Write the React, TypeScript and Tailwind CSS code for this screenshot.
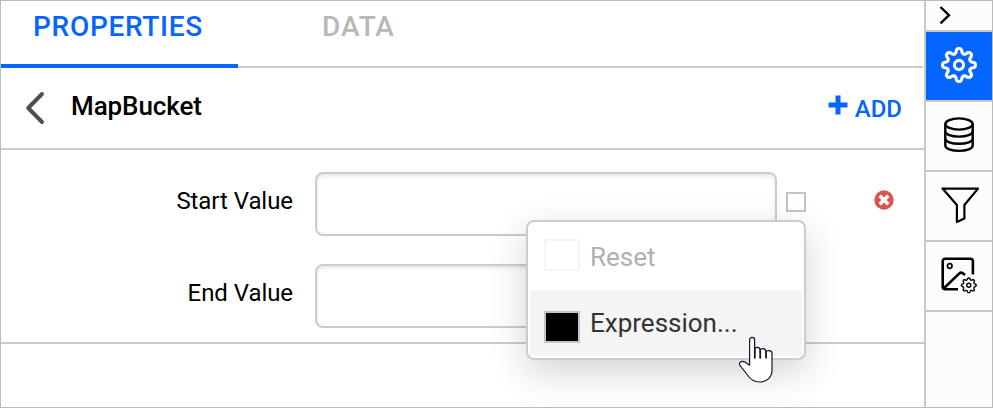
import React from 'react';

function gearPath(c: number, r: number, amp: number) {
  const pts: string[] = [];
  for (let i = 0; i < 160; i++) {
    const a = (i / 160) * Math.PI * 2;
    const w = Math.tanh(1.5 * Math.cos(8 * a)) / Math.tanh(1.5);
    const rr = r + amp * w;
    pts.push(`${(c + rr * Math.sin(a)).toFixed(2)} ${(c - rr * Math.cos(a)).toFixed(2)}`);
  }
  return `M${pts.join('L')}Z`;
}

const GearIcon = () => (
  <svg width="38" height="38" viewBox="0 0 38 38" fill="none" stroke="white" strokeWidth="3.1" strokeLinejoin="round">
    <path d={gearPath(19, 14.2, 2.3)} />
    <circle cx="19" cy="19" r="4.6" />
  </svg>
);

const DatabaseIcon = () => (
  <svg width="34" height="40" viewBox="0 0 34 40" fill="none" stroke="black" strokeWidth="2.4">
    <ellipse cx="17" cy="9" rx="13.7" ry="5.6" />
    <path d="M3.3 9v21.5c0 3.1 6 5.4 13.7 5.4s13.7-2.3 13.7-5.4V9" />
    <path d="M3.3 16.2c0 3.1 6 5.4 13.7 5.4s13.7-2.3 13.7-5.4M3.3 23.4c0 3.1 6 5.4 13.7 5.4s13.7-2.3 13.7-5.4" />
  </svg>
);

const FilterIcon = () => (
  <svg width="40" height="38" viewBox="0 0 40 38" fill="none" stroke="black" strokeWidth="2.2" strokeLinejoin="round">
    <path d="M3.5 2.6H39L25.4 19V32.6L17.9 36V19Z" />
  </svg>
);

const ImageSettingsIcon = () => (
  <svg width="38" height="38" viewBox="0 0 38 38" fill="none" stroke="black">
    <path d="M18 33.3H5.4Q2.7 33.3 2.7 30.6V5.5Q2.7 2.8 5.4 2.8H30.2Q32.9 2.8 32.9 5.5V18.5" strokeWidth="2.6" />
    <path d="M3.6 32.5L19.4 17.4Q21 15.8 22.8 17.2L25 19" strokeWidth="2.6" />
    <circle cx="9.7" cy="10" r="2.3" strokeWidth="1.7" />
    <g transform="translate(19.8 20.3)" strokeWidth="1.4">
      <path d={gearPath(9, 6.5, 0.85)} />
      <circle cx="9" cy="9" r="2" />
    </g>
  </svg>
);

const HandCursor = () => (
  <svg className="absolute left-[737px] top-[335px]" width="36" height="48" viewBox="0 0 36 48" fill="white" stroke="#16162b" strokeWidth="1.2" strokeLinejoin="round" strokeLinecap="round">
    <path d="M11.6 29.2V3.7C11.6 .7 16.6 .7 16.6 3.7V14C16.6 10.5 22 10.5 22 14V15C22 11.7 27.8 12 27.8 15.5V16.5C28.2 13.8 34 14 34 17.5V34C34 41 29 46 22 46C15.5 46 12 43 9.5 39L2.3 29.8C-.2 26.2 3.8 24.2 6.8 26.1Z" />
    <path d="M16.8 14V21.8M22.2 15V21.8M28 16.5V21.8" fill="none" strokeWidth="1.8" />
  </svg>
);

const Field = ({ label, children }: { label: string; children?: React.ReactNode }) => (
  <div className="flex h-16 items-center">
    <label className="w-[292px] whitespace-nowrap pb-[7px] text-right text-[24px] leading-8 tracking-[-0.06px] text-black">{label}</label>
    <div className="ml-[22px] h-16 w-[462px] rounded-lg border-2 border-[#ccc] bg-white shadow-[inset_0_2px_4px_rgba(0,0,0,0.1)]" />
    {children}
  </div>
);

const SideItem = ({ active, children }: { active?: boolean; children?: React.ReactNode }) => (
  <div className={`flex h-[70px] shrink-0 items-center justify-center border-b-2 border-[#c8c8c8] pb-0.5 ${active ? 'bg-[#0565ff]' : 'bg-[#fcfcfc]'}`}>
    {children}
  </div>
);

export default function App() {
  return (
    <div className="relative flex h-[408px] w-[993px] overflow-hidden border border-[#bbb] bg-white font-[Roboto,sans-serif]">
      <main className="flex w-[923px] shrink-0 flex-col">
        <nav className="mr-px flex h-[67px] shrink-0 border-b-2 border-[#ccc] text-[28px] font-medium leading-[52px]">
          <div className="h-[67px] w-[237px] shrink-0 border-b-4 border-[#0565ff] pl-8 tracking-[0.7px] text-[#0565ff]"><span className="whitespace-nowrap">PROPERTIES</span></div>
          <div className="pl-[84px] tracking-[0.9px] text-[#b8b8b8]"><span>DATA</span></div>
        </nav>
        <header className="flex h-[82px] shrink-0 items-center border-b-2 border-[#ccc] pl-6">
          <svg width="20" height="34" viewBox="0 0 20 34" fill="none" stroke="#505050" strokeWidth="4" strokeLinecap="round" strokeLinejoin="round">
            <path d="M17 3L3.2 17L17 31" />
          </svg>
          <h1 className="mb-[5px] ml-[26px] text-[26px] font-medium leading-8 tracking-[-0.1px] text-black"><span>MapBucket</span></h1>
          <button className="ml-auto mr-[22px] flex items-center text-[24px] font-medium text-[#0565ff]">
            <svg className="mb-1.5" width="20" height="20" viewBox="0 0 20 20" fill="none" stroke="currentColor" strokeWidth="5"><path d="M10 .5V19.5M.5 10H19.5" /></svg>
            <span className="ml-[7px] mt-0.5">ADD</span>
          </button>
        </header>
        <section className="flex h-[194px] shrink-0 flex-col gap-7 border-b-2 border-[#ccc] pt-[22px]">
          <Field label="Start Value">
            <span className="ml-[9px] mt-[-4px] size-5 border-2 border-[#c4c4c4]" />
            <svg className="ml-[68px] mt-[-9px]" width="20" height="20" viewBox="0 0 20 20">
              <circle cx="10" cy="10" r="9.7" fill="#d9534f" />
              <path d="M5.7 5.7L14.3 14.3M14.3 5.7L5.7 14.3" stroke="white" strokeWidth="3.6" />
            </svg>
          </Field>
          <Field label="End Value" />
        </section>
      </main>
      <aside className="flex w-[68px] shrink-0 flex-col border-l-2 border-[#c8c8c8] bg-[#fcfcfc]">
        <div className="flex h-[31px] shrink-0 items-center border-b-2 border-[#c8c8c8] pb-0.5 pl-[13px]">
          <svg width="14" height="20" viewBox="0 0 14 20" fill="none" stroke="black" strokeWidth="2.4"><path d="M1.5 2L10 10.2L1.5 18.4" /></svg>
        </div>
        <SideItem active><GearIcon /></SideItem>
        <SideItem><DatabaseIcon /></SideItem>
        <SideItem><FilterIcon /></SideItem>
        <SideItem><ImageSettingsIcon /></SideItem>
      </aside>

      <div className="absolute left-[525px] top-[219px] h-[140px] w-[280px] rounded-lg border-2 border-[#ccc] bg-white px-0.5 shadow-[0_12px_36px_rgba(0,0,0,0.175)]">
        <div className="flex h-[68px] items-center pl-3.5 text-[26px] text-[#b0b0b0]">
          <span className="mb-0.5 h-8 w-9 border-2 border-[#f5f5f5]" />
          <span className="ml-[10px] mt-[3px]">Reset</span>
        </div>
        <div className="flex h-[66px] items-center bg-[#f4f4f4] pl-3.5 text-[26px] text-[#333]">
          <span className="mt-[7px] h-8 w-9 border-2 border-[#c4c4c4] bg-black" />
          <span className="ml-[10px]">Expression...</span>
        </div>
      </div>
      <HandCursor />
    </div>
  );
}
